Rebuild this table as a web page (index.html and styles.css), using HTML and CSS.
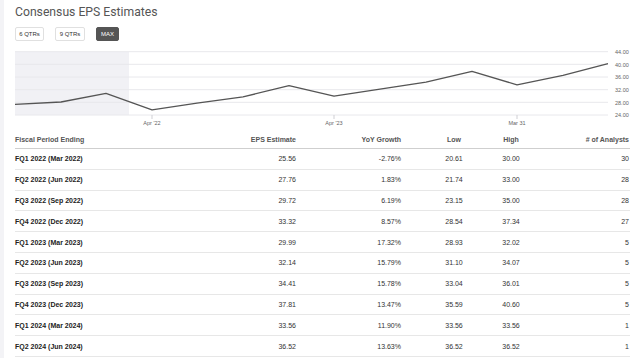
FILE: index.html
```html
<!DOCTYPE html>
<html>
<head>
<meta charset="utf-8">
<link rel="stylesheet" href="styles.css">
</head>
<body>
<div class="page">
  <h1 class="title">Consensus EPS Estimates</h1>
  <div class="tabs">
    <button class="tab">6 QTRs</button>
    <button class="tab">9 QTRs</button>
    <button class="tab active">MAX</button>
  </div>
  <svg class="chart" width="615" height="86" viewBox="0 0 615 86">
    <rect x="0" y="6.7" width="114" height="63.3" fill="#f1f1f5"/>
    <g stroke="#e8e8ec" stroke-width="1">
      <line x1="0" x2="593" y1="6.7" y2="6.7"/>
      <line x1="0" x2="593" y1="19.3" y2="19.3"/>
      <line x1="0" x2="593" y1="32" y2="32"/>
      <line x1="0" x2="593" y1="44.7" y2="44.7"/>
      <line x1="0" x2="593" y1="57.3" y2="57.3"/>
      <line x1="0" x2="593" y1="70" y2="70"/>
    </g>
    <g stroke="#cfcfd4" stroke-width="1">
      <line x1="137" x2="137" y1="70" y2="74"/>
      <line x1="319" x2="319" y1="70" y2="74"/>
      <line x1="502" x2="502" y1="70" y2="74"/>
    </g>
    <polyline fill="none" stroke="#555" stroke-width="1.3" stroke-linejoin="round" points="0,59.3 46,57 91,48.3 137,64.9 182,58.1 228,51.9 274,40.6 319,51.1 365,44.2 411,37.1 457,26.3 502,39.8 548,30.4 593,18.7"/>
    <g class="ylab">
      <text x="600" y="9">44.00</text>
      <text x="600" y="21.6">40.00</text>
      <text x="600" y="34.3">36.00</text>
      <text x="600" y="47">32.00</text>
      <text x="600" y="59.6">28.00</text>
      <text x="600" y="72.3">24.00</text>
    </g>
    <g class="xlab">
      <text x="137" y="79.5">Apr '22</text>
      <text x="319" y="79.5">Apr '23</text>
      <text x="502" y="79.5">Mar 31</text>
    </g>
  </svg>
  <div class="table">
    <div class="row head">
      <div class="c1">Fiscal Period Ending</div>
      <div class="c2">EPS Estimate</div>
      <div class="c3">YoY Growth</div>
      <div class="c4">Low</div>
      <div class="c5">High</div>
      <div class="c6"># of Analysts</div>
    </div>
    <div class="row"><div class="c1">FQ1 2022 (Mar 2022)</div><div class="c2">25.56</div><div class="c3">-2.76%</div><div class="c4">20.61</div><div class="c5">30.00</div><div class="c6">30</div></div>
    <div class="row"><div class="c1">FQ2 2022 (Jun 2022)</div><div class="c2">27.76</div><div class="c3">1.83%</div><div class="c4">21.74</div><div class="c5">33.00</div><div class="c6">28</div></div>
    <div class="row"><div class="c1">FQ3 2022 (Sep 2022)</div><div class="c2">29.72</div><div class="c3">6.19%</div><div class="c4">23.15</div><div class="c5">35.00</div><div class="c6">28</div></div>
    <div class="row"><div class="c1">FQ4 2022 (Dec 2022)</div><div class="c2">33.32</div><div class="c3">8.57%</div><div class="c4">28.54</div><div class="c5">37.34</div><div class="c6">27</div></div>
    <div class="row"><div class="c1">FQ1 2023 (Mar 2023)</div><div class="c2">29.99</div><div class="c3">17.32%</div><div class="c4">28.93</div><div class="c5">32.02</div><div class="c6">5</div></div>
    <div class="row"><div class="c1">FQ2 2023 (Jun 2023)</div><div class="c2">32.14</div><div class="c3">15.79%</div><div class="c4">31.10</div><div class="c5">34.07</div><div class="c6">5</div></div>
    <div class="row"><div class="c1">FQ3 2023 (Sep 2023)</div><div class="c2">34.41</div><div class="c3">15.78%</div><div class="c4">33.04</div><div class="c5">36.01</div><div class="c6">5</div></div>
    <div class="row"><div class="c1">FQ4 2023 (Dec 2023)</div><div class="c2">37.81</div><div class="c3">13.47%</div><div class="c4">35.59</div><div class="c5">40.60</div><div class="c6">5</div></div>
    <div class="row"><div class="c1">FQ1 2024 (Mar 2024)</div><div class="c2">33.56</div><div class="c3">11.90%</div><div class="c4">33.56</div><div class="c5">33.56</div><div class="c6">1</div></div>
    <div class="row"><div class="c1">FQ2 2024 (Jun 2024)</div><div class="c2">36.52</div><div class="c3">13.63%</div><div class="c4">36.52</div><div class="c5">36.52</div><div class="c6">1</div></div>
  </div>
</div>
</body>
</html>
```
FILE: styles.css
```css
html, body {
  margin: 0;
  padding: 0;
  background: #f3f3f6;
  font-family: "Liberation Sans", Arial, sans-serif;
}
.page {
  margin-left: 4px;
  background: #fff;
  padding: 0 10px 0 11px;
  height: 358px;
  overflow: hidden;
}
.title {
  margin: 0;
  padding-top: 4px;
  font-family: Roboto, "Liberation Sans", sans-serif;
  font-weight: 400;
  font-size: 12.2px;
  line-height: 17px;
  color: #555;
}
.tabs {
  display: flex;
  gap: 11px;
  margin-top: 6px;
}
.tab {
  box-sizing: border-box;
  font-family: "Liberation Sans", Arial, sans-serif;
  font-size: 6px;
  height: 14px;
  padding: 0;
  white-space: nowrap;
  border: 1px solid #e0e0e0;
  border-radius: 2px;
  background: #fff;
  color: #333;
  line-height: 12px;
  text-align: center;
}
.tab:first-child { width: 29px; }
.tab:nth-child(2) { width: 30px; }
.tab.active {
  width: 23px;
  background: #555;
  border-color: #555;
  color: #fff;
}
.chart {
  display: block;
  margin-top: 4px;
}
.ylab text {
  font-size: 5.5px;
  fill: #666;
  font-family: "Liberation Sans", Arial, sans-serif;
}
.xlab text {
  font-size: 5.5px;
  fill: #666;
  text-anchor: middle;
  font-family: "Liberation Sans", Arial, sans-serif;
}
.table {
  margin-top: 1px;
  font-size: 7px;
  color: #333;
}
.row {
  display: grid;
  grid-template-columns: 200px 81px 134px 48px 66px 86px;
  align-items: center;
  height: 20.8px;
  box-sizing: border-box;
  border-bottom: 1px solid #e7e7e7;
}
.row.head {
  height: 17px;
  padding-bottom: 2px;
  border-bottom: 1px solid #cfcfcf;
  color: #555;
  font-weight: 600;
}
.row .c1 { font-weight: 700; color: #222; }
.row.head .c1 { font-weight: 600; color: #555; }
.c2 { text-align: right; }
.c3 { text-align: right; padding-right: 29px; }
.c4 { text-align: center; }
.c5 { text-align: center; }
.c6 { text-align: right; padding-right: 1px; }
```
